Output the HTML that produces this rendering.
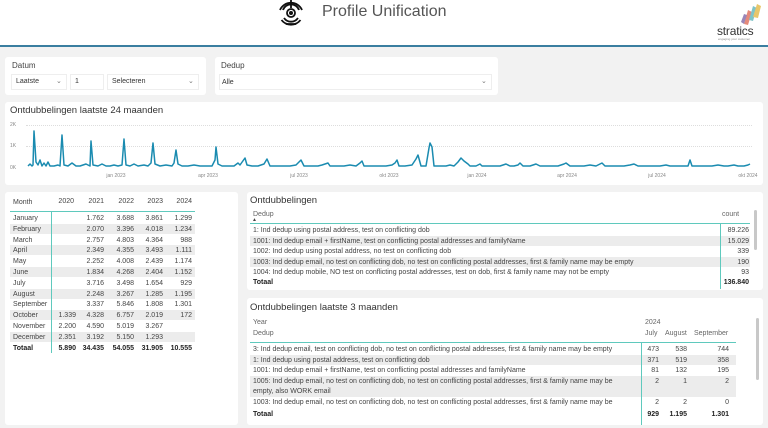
<!DOCTYPE html>
<html><head><meta charset="utf-8"><style>
*{margin:0;padding:0;box-sizing:border-box}
body{width:768px;height:428px;overflow:hidden;background:#f2f2f2;font-family:"Liberation Sans",sans-serif;position:relative;color:#333}
.a{position:absolute;white-space:nowrap}
.p{position:absolute;background:#fff;border-radius:3px}
.s{font-size:7px;color:#444}
.r{text-align:right}
.g{position:absolute;background:#ececec}
.b{font-weight:bold;color:#222}
.t{position:absolute;background:#5fc9bd}
</style></head><body>
<div class="a" style="left:0;top:0;width:768px;height:45px;background:#fff"></div>
<div class="a" style="left:0;top:45px;width:768px;height:2px;background:#3a7ea0"></div>
<svg class="a" style="left:278px;top:0" width="26" height="27" viewBox="0 0 26 27">
<g fill="none" stroke="#111" stroke-width="1.8">
<circle cx="13" cy="13" r="4"/>
<path d="M5 10a8.5 8.5 0 0 1 16 0M6 18a8.5 8.5 0 0 0 14 0"/>
<path d="M2 10a12 12 0 0 1 22 0M3.5 20a12 12 0 0 0 19 0"/>
<path d="M13 0v8M8 24h10"/>
</g><circle cx="13" cy="13" r="2" fill="#111"/></svg>
<div class="a" style="left:322px;top:3px;font-size:16px;color:#555">Profile Unification</div>
<svg class="a" style="left:738px;top:2px" width="26" height="24" viewBox="0 0 26 24">
<path d="M6 22 L10 8 L14 10 L10 23Z" fill="#e58a7a"/>
<path d="M11 18 L15 4 L19 6 L15 19Z" fill="#7fc4c8"/>
<path d="M15 15 L19 2 L23 4 L20 16Z" fill="#e8c66a"/>
<path d="M3 20 L6 12 L9 13 L6 22Z" fill="#9a86b8"/>
</svg>
<div class="a" style="left:717px;top:24px;font-size:12px;color:#333;letter-spacing:-.2px">stratics</div>
<div class="a" style="left:718px;top:37px;font-size:3px;color:#888">engaging your customer</div>

<div class="p" style="left:5px;top:57px;width:201px;height:38px"></div>
<div class="a" style="left:12px;top:61px;font-size:8px;color:#444">Datum</div>
<div class="a" style="left:11px;top:74px;width:56px;height:16px;border:1px solid #eee"></div>
<div class="a" style="left:16px;top:78px;font-size:7px">Laatste</div>
<div class="a" style="left:56px;top:77px;font-size:7px;color:#777">⌄</div>
<div class="a" style="left:70px;top:74px;width:34px;height:16px;border:1px solid #eee"></div>
<div class="a" style="left:75px;top:78px;font-size:7px">1</div>
<div class="a" style="left:107px;top:74px;width:92px;height:16px;border:1px solid #eee"></div>
<div class="a" style="left:112px;top:78px;font-size:7px">Selecteren</div>
<div class="a" style="left:188px;top:77px;font-size:7px;color:#777">⌄</div>

<div class="p" style="left:215px;top:57px;width:283px;height:38px"></div>
<div class="a" style="left:221px;top:61px;font-size:8px;color:#444">Dedup</div>
<div class="a" style="left:219px;top:74px;width:273px;height:16px;border:1px solid #eee"></div>
<div class="a" style="left:222px;top:79px;font-size:7px">Alle</div>
<div class="a" style="left:481px;top:77px;font-size:7px;color:#777">⌄</div>

<div class="p" style="left:5px;top:102px;width:758px;height:83px"></div>
<div class="a" style="left:10px;top:105px;font-size:9.5px;color:#333">Ontdubbelingen laatste 24 maanden</div>
<div class="a" style="left:10px;top:122px;font-size:5px;color:#888">2K</div>
<div class="a" style="left:10px;top:143px;font-size:5px;color:#888">1K</div>
<div class="a" style="left:10px;top:165px;font-size:5px;color:#888">0K</div>
<div class="a" style="left:26px;top:125px;width:726px;border-top:1px dotted #ddd"></div>
<div class="a" style="left:26px;top:146px;width:726px;border-top:1px dotted #ddd"></div>
<svg class="a" style="left:0;top:0" width="768" height="190">
<polyline fill="none" stroke="#1a8bb0" stroke-width="1.5" stroke-linejoin="round" points="28,166 30,164 32,166 33,165 34,131 36,162 38,165 40,160 42,166 44,163 46,166 48,162 50,166 54,166 58,165 60,166 62,135 64,165 68,166 72,163 76,166 80,166 86,164 90,166 91,141 93,165 98,166 102,164 106,166 110,166 114,165 118,166 122,165 124,139 126,165 130,166 134,164 138,166 144,165 148,166 151,163 153,143 155,164 160,166 166,165 172,166 174,163 176,150 178,164 182,166 188,166 194,165 200,166 206,166 212,166 215,160 216,147 218,164 222,166 228,166 234,166 238,163 240,165 245,158 247,165 252,166 258,166 264,164 267,159 270,166 276,166 282,166 290,166 296,165 301,160 304,166 310,166 318,166 322,165 328,163 330,166 336,166 344,166 350,165 356,166 360,163 362,161 364,166 370,166 378,166 386,166 392,165 395,163 397,160 399,166 405,166 412,165 416,159 418,155 421,166 426,166 429,148 430,143 432,147 434,166 440,166 446,166 450,165 454,166 458,162 461,158 464,161 468,164 470,166 476,166 480,164 482,166 488,166 494,166 500,166 506,164 510,166 514,166 518,165 520,163 523,166 530,166 536,164 540,166 546,166 552,166 558,166 564,164 566,163 570,166 576,166 584,166 590,165 596,166 600,164 602,163 605,166 610,166 616,166 624,166 630,165 634,164 638,166 644,166 650,166 660,166 666,165 670,166 676,166 682,166 688,166 690,160 692,166 698,166 706,166 712,166 718,165 724,166 728,166 734,165 738,166 744,166 748,165 750,164"/>
<g font-family="Liberation Sans" font-size="5" fill="#888" text-anchor="middle">
<text x="116" y="177">jan 2023</text><text x="208" y="177">apr 2023</text><text x="299" y="177">jul 2023</text><text x="389" y="177">okt 2023</text><text x="477" y="177">jan 2024</text><text x="567" y="177">apr 2024</text><text x="657" y="177">jul 2024</text><text x="748" y="177">okt 2024</text></g>
</svg>

<div class="p" style="left:5px;top:192px;width:233px;height:233px"></div>
<div class="g" style="left:10px;top:224px;width:185px;height:10px"></div>
<div class="g" style="left:10px;top:245px;width:185px;height:10px"></div>
<div class="g" style="left:10px;top:267px;width:185px;height:10px"></div>
<div class="g" style="left:10px;top:289px;width:185px;height:10px"></div>
<div class="g" style="left:10px;top:310px;width:185px;height:10px"></div>
<div class="g" style="left:10px;top:332px;width:185px;height:10px"></div>
<div class="t" style="left:10px;top:211px;width:185px;height:1px"></div>
<div class="t" style="left:51px;top:211px;width:1px;height:142px"></div>
<div class="a s" style="left:13px;top:198px;line-height:10.8px">Month</div>
<div class="a s" style="left:13px;top:214px;line-height:10.8px">January<br>February<br>March<br>April<br>May<br>June<br>July<br>August<br>September<br>October<br>November<br>December<br><b class="b">Totaal</b></div>
<div class="a s r" style="left:44px;top:198px;width:30px">2020</div>
<div class="a s r" style="left:74px;top:198px;width:30px">2021</div>
<div class="a s r" style="left:104px;top:198px;width:30px">2022</div>
<div class="a s r" style="left:133px;top:198px;width:30px">2023</div>
<div class="a s r" style="left:162px;top:198px;width:30px">2024</div>
<div class="a s r" style="left:44px;top:214px;width:32px;line-height:10.8px"><br><br><br><br><br><br><br><br><br>1.339<br>2.200<br>2.351<br><b class="b">5.890</b></div>
<div class="a s r" style="left:70px;top:214px;width:34px;line-height:10.8px">1.762<br>2.070<br>2.757<br>2.349<br>2.252<br>1.834<br>3.716<br>2.248<br>3.337<br>4.328<br>4.590<br>3.192<br><b class="b">34.435</b></div>
<div class="a s r" style="left:100px;top:214px;width:34px;line-height:10.8px">3.688<br>3.396<br>4.803<br>4.355<br>4.008<br>4.268<br>3.498<br>3.267<br>5.846<br>6.757<br>5.019<br>5.150<br><b class="b">54.055</b></div>
<div class="a s r" style="left:129px;top:214px;width:34px;line-height:10.8px">3.861<br>4.018<br>4.364<br>3.493<br>2.439<br>2.404<br>1.654<br>1.285<br>1.808<br>2.019<br>3.267<br>1.293<br><b class="b">31.905</b></div>
<div class="a s r" style="left:158px;top:214px;width:34px;line-height:10.8px">1.299<br>1.234<br>988<br>1.111<br>1.174<br>1.152<br>929<br>1.195<br>1.301<br>172<br><br><br><b class="b">10.555</b></div>

<div class="p" style="left:247px;top:192px;width:516px;height:98px"></div>
<div class="a" style="left:250px;top:195px;font-size:9.5px;color:#333">Ontdubbelingen</div>
<div class="a s" style="left:253px;top:211px;color:#666">Dedup</div>
<div class="a s" style="left:252px;top:217px;font-size:5px">▲</div>
<div class="a s" style="left:722px;top:211px;color:#666">count</div>
<div class="t" style="left:250px;top:223px;width:500px;height:1px"></div>
<div class="g" style="left:250px;top:236px;width:500px;height:10px"></div>
<div class="g" style="left:250px;top:257px;width:500px;height:10px"></div>
<div class="t" style="left:720px;top:223px;width:1px;height:66px"></div>
<div class="a" style="left:754px;top:210px;width:3px;height:40px;background:#c8c8c8;border-radius:2px"></div>
<div class="a s" style="left:253px;top:226px;line-height:10.6px;width:465px;height:53px;overflow:hidden">1: Ind dedup using postal address, test on conflicting dob<br>1001: Ind dedup email + firstName, test on conflicting postal addresses and familyName<br>1002: Ind dedup using postal address, no test on conflicting dob<br>1003: Ind dedup email, no test on conflicting dob, no test on conflicting postal addresses, first &amp; family name may be empty<br>1004: Ind dedup mobile, NO test on conflicting postal addresses, test on dob, first &amp; family name may not be empty</div>
<div class="a s r" style="left:700px;top:226px;width:49px;line-height:10.6px">89.226<br>15.029<br>339<br>190<br>93</div>
<div class="a s b" style="left:253px;top:279px">Totaal</div>
<div class="a s b r" style="left:700px;top:279px;width:49px">136.840</div>

<div class="p" style="left:247px;top:298px;width:516px;height:127px"></div>
<div class="a" style="left:250px;top:302px;font-size:9.5px;color:#333">Ontdubbelingen laatste 3 maanden</div>
<div class="a s" style="left:253px;top:319px;color:#666">Year</div>
<div class="a s" style="left:253px;top:330px;color:#666">Dedup</div>
<div class="a s" style="left:645px;top:319px;color:#666">2024</div>
<div class="a s" style="left:645px;top:330px;color:#666">July</div>
<div class="a s" style="left:665px;top:330px;color:#666">August</div>
<div class="a s" style="left:694px;top:330px;color:#666">September</div>
<div class="t" style="left:250px;top:342px;width:486px;height:1px"></div>
<div class="g" style="left:250px;top:355px;width:486px;height:10px"></div>
<div class="g" style="left:250px;top:376px;width:486px;height:21px"></div>
<div class="t" style="left:641px;top:342px;width:1px;height:83px"></div>
<div class="a" style="left:756px;top:318px;width:3px;height:62px;background:#c8c8c8;border-radius:2px"></div>
<div class="a s" style="left:253px;top:345px;line-height:10.6px;width:390px;height:63px;overflow:hidden">3: Ind dedup email, test on conflicting dob, no test on conflicting postal addresses, first &amp; family name may be empty<br>1: Ind dedup using postal address, test on conflicting dob<br>1001: Ind dedup email + firstName, test on conflicting postal addresses and familyName<br>1005: Ind dedup email, no test on conflicting dob, no test on conflicting postal addresses, first &amp; family name may be<br>empty, also WORK email<br>1003: Ind dedup email, no test on conflicting dob, no test on conflicting postal addresses, first &amp; family name may be</div>
<div class="a s r" style="left:630px;top:345px;width:29px;line-height:10.6px">473<br>371<br>81<br>2<br><br>2</div>
<div class="a s r" style="left:660px;top:345px;width:27px;line-height:10.6px">538<br>519<br>132<br>1<br><br>2</div>
<div class="a s r" style="left:700px;top:345px;width:29px;line-height:10.6px">744<br>358<br>195<br>2<br><br>0</div>
<div class="a s b" style="left:253px;top:411px">Totaal</div>
<div class="a s b r" style="left:630px;top:411px;width:29px">929</div>
<div class="a s b r" style="left:660px;top:411px;width:27px">1.195</div>
<div class="a s b r" style="left:700px;top:411px;width:29px">1.301</div>
</body></html>
